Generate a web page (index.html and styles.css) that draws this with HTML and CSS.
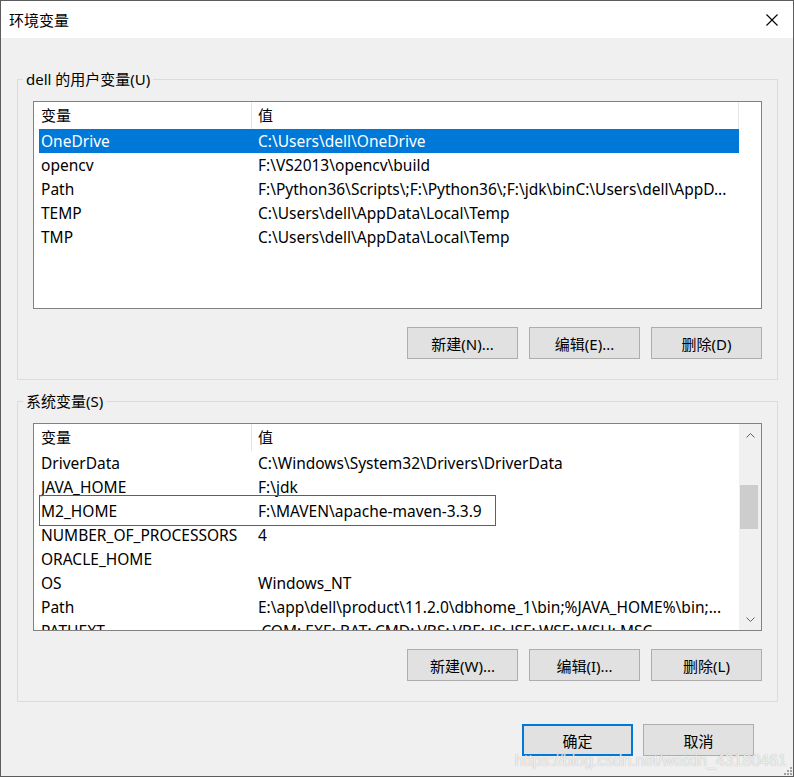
FILE: index.html
```html
<!DOCTYPE html>
<html lang="zh-CN">
<head>
  <meta charset="UTF-8">
  <title>环境变量</title>
  <link rel="stylesheet" href="styles.css">
</head>
<body>
  <div class="window">
    <div class="titlebar">
      <span class="title">环境变量</span>
      <svg class="close" width="12" height="12" viewBox="0 0 12 12">
        <path d="M0.5 0.5 L11.5 11.5 M11.5 0.5 L0.5 11.5" stroke="#000" stroke-width="1.1" fill="none"/>
      </svg>
    </div>

    <div class="content">
      <!-- user variables -->
      <fieldset class="group">
        <legend>dell 的用户变量(U)</legend>
        <div class="listview">
          <div class="lv-main">
            <div class="lv-head">
              <div class="hcol name">变量</div>
              <div class="hcol value">值</div>
            </div>
            <div class="row selected"><span class="c1">OneDrive</span><span class="c2">C:\Users\dell\OneDrive</span></div>
            <div class="row"><span class="c1">opencv</span><span class="c2">F:\VS2013\opencv\build</span></div>
            <div class="row"><span class="c1">Path</span><span class="c2">F:\Python36\Scripts\;F:\Python36\;F:\jdk\binC:\Users\dell\AppD...</span></div>
            <div class="row"><span class="c1">TEMP</span><span class="c2">C:\Users\dell\AppData\Local\Temp</span></div>
            <div class="row"><span class="c1">TMP</span><span class="c2">C:\Users\dell\AppData\Local\Temp</span></div>
          </div>
        </div>
        <div class="btnrow">
          <button>新建(N)...</button>
          <button>编辑(E)...</button>
          <button>删除(D)</button>
        </div>
      </fieldset>

      <!-- system variables -->
      <fieldset class="group second">
        <legend>系统变量(S)</legend>
        <div class="listview">
          <div class="lv-main">
            <div class="lv-head">
              <div class="hcol name">变量</div>
              <div class="hcol value open">值</div>
            </div>
            <div class="row"><span class="c1">DriverData</span><span class="c2">C:\Windows\System32\Drivers\DriverData</span></div>
            <div class="row"><span class="c1">JAVA_HOME</span><span class="c2">F:\jdk</span></div>
            <div class="row marked"><span class="c1">M2_HOME</span><span class="c2">F:\MAVEN\apache-maven-3.3.9</span><span class="redbox"></span></div>
            <div class="row"><span class="c1">NUMBER_OF_PROCESSORS</span><span class="c2">4</span></div>
            <div class="row"><span class="c1">ORACLE_HOME</span><span class="c2"></span></div>
            <div class="row"><span class="c1">OS</span><span class="c2">Windows_NT</span></div>
            <div class="row"><span class="c1">Path</span><span class="c2">E:\app\dell\product\11.2.0\dbhome_1\bin;%JAVA_HOME%\bin;...</span></div>
            <div class="row"><span class="c1">PATHEXT</span><span class="c2">.COM;.EXE;.BAT;.CMD;.VBS;.VBE;.JS;.JSE;.WSF;.WSH;.MSC</span></div>
          </div>
          <div class="scrollbar">
            <div class="sb-btn">
              <svg width="9" height="5" viewBox="0 0 9 5"><path d="M0.5 4.5 L4.5 0.5 L8.5 4.5" stroke="#606060" fill="none"/></svg>
            </div>
            <div class="sb-track"><div class="sb-thumb"></div></div>
            <div class="sb-btn">
              <svg width="9" height="5" viewBox="0 0 9 5"><path d="M0.5 0.5 L4.5 4.5 L8.5 0.5" stroke="#606060" fill="none"/></svg>
            </div>
          </div>
        </div>
        <div class="btnrow">
          <button>新建(W)...</button>
          <button>编辑(I)...</button>
          <button>删除(L)</button>
        </div>
      </fieldset>

      <div class="footer">
        <button class="default">确定</button>
        <button>取消</button>
      </div>
    </div>

    <div class="watermark">https://blog.csdn.net/weixin_43180461</div>
    <svg class="grip" width="9" height="9" viewBox="0 0 9 9">
      <rect x="7" y="1" width="2" height="2" fill="#a0a0a0"/>
      <rect x="4" y="4" width="2" height="2" fill="#a0a0a0"/>
      <rect x="7" y="4" width="2" height="2" fill="#a0a0a0"/>
      <rect x="1" y="7" width="2" height="2" fill="#a0a0a0"/>
      <rect x="4" y="7" width="2" height="2" fill="#a0a0a0"/>
      <rect x="7" y="7" width="2" height="2" fill="#a0a0a0"/>
    </svg>
  </div>
</body>
</html>
```

FILE: styles.css
```css
* { box-sizing: border-box; }

html, body {
  margin: 0;
  padding: 0;
}

body {
  font-family: "Noto Sans", "Noto Sans CJK SC", sans-serif;
  font-size: 15px;
  color: #000;
  background: #f0f0f0;
}

.window {
  position: relative;
  width: 794px;
  height: 777px;
  border: 1px solid #5c5c5c;
  background: #f0f0f0;
  display: flex;
  flex-direction: column;
}

.titlebar {
  height: 37px;
  flex: none;
  background: #fff;
  display: flex;
  align-items: center;
  justify-content: space-between;
  padding: 0 15px 0 8px;
}

.title {
  font-size: 15px;
  line-height: 20px;
}

.content {
  padding: 0 15px 0 16px;
}

.group {
  margin: 31px 0 0;
  padding: 12px 15px 20px 15px;
  border: 1px solid #dcdcdc;
  min-width: 0;
}

.group.second {
  margin-top: 11px;
}

.group legend {
  margin-left: -10px;
  padding: 0 3px;
  line-height: 20px;
  height: 20px;
}

/* list view */
.listview {
  height: 208px;
  border: 1px solid #828282;
  background: #fff;
  display: flex;
  overflow: hidden;
}

.lv-main {
  width: 705px;
  flex: none;
  overflow: hidden;
}

.lv-head {
  display: flex;
  height: 27px;
}

.hcol {
  line-height: 27px;
  height: 27px;
  white-space: nowrap;
}

.hcol.name {
  width: 218px;
  padding-left: 7px;
  border-right: 1px solid #e5e5e5;
}

.hcol.value {
  flex: 1;
  padding-left: 6px;
  border-right: 1px solid #e5e5e5;
}

.hcol.value.open {
  border-right: none;
}

.row {
  position: relative;
  display: flex;
  margin-left: 5px;
  width: 700px;
  height: 24px;
  line-height: 24px;
  font-size: 15.5px;
  white-space: nowrap;
}

.row .c1 {
  width: 213px;
  flex: none;
  padding-left: 2px;
  overflow: hidden;
}

.row .c2 {
  flex: 1;
  padding-left: 6px;
  overflow: hidden;
}

.row.selected {
  background: #0078d7;
  color: #fff;
}

.redbox {
  position: absolute;
  left: 0;
  top: -4px;
  width: 457px;
  height: 31px;
  border: 1px solid #e0282f;
}

/* scrollbar */
.scrollbar {
  width: 22px;
  flex: none;
  background: #f0f0f0;
  display: flex;
  flex-direction: column;
}

.sb-btn {
  height: 22px;
  flex: none;
  display: flex;
  align-items: center;
  justify-content: center;
}

.sb-track {
  flex: 1;
}

.sb-thumb {
  margin: 39px 3px 0 1px;
  height: 44px;
  background: #cdcdcd;
}

/* buttons */
button {
  font-family: inherit;
  font-size: 15px;
  color: #000;
  background: #e1e1e1;
  border: 1px solid #adadad;
  height: 32px;
  width: 111px;
  padding: 0;
  margin: 0;
}

.btnrow {
  display: flex;
  justify-content: flex-end;
  gap: 11px;
  margin-top: 18px;
}

.footer {
  display: flex;
  justify-content: flex-end;
  gap: 10px;
  margin-top: 22px;
  padding-right: 24px;
}

button.default {
  border: 2px solid #0078d7;
}

.watermark {
  position: absolute;
  right: 6px;
  bottom: 6px;
  font-family: "Liberation Sans", sans-serif;
  font-size: 16px;
  color: rgba(255, 255, 255, 0.8);
  text-shadow: 0 0 1px rgba(90, 90, 90, 0.5);
  pointer-events: none;
}

.grip {
  position: absolute;
  right: 1px;
  bottom: 1px;
}
```
